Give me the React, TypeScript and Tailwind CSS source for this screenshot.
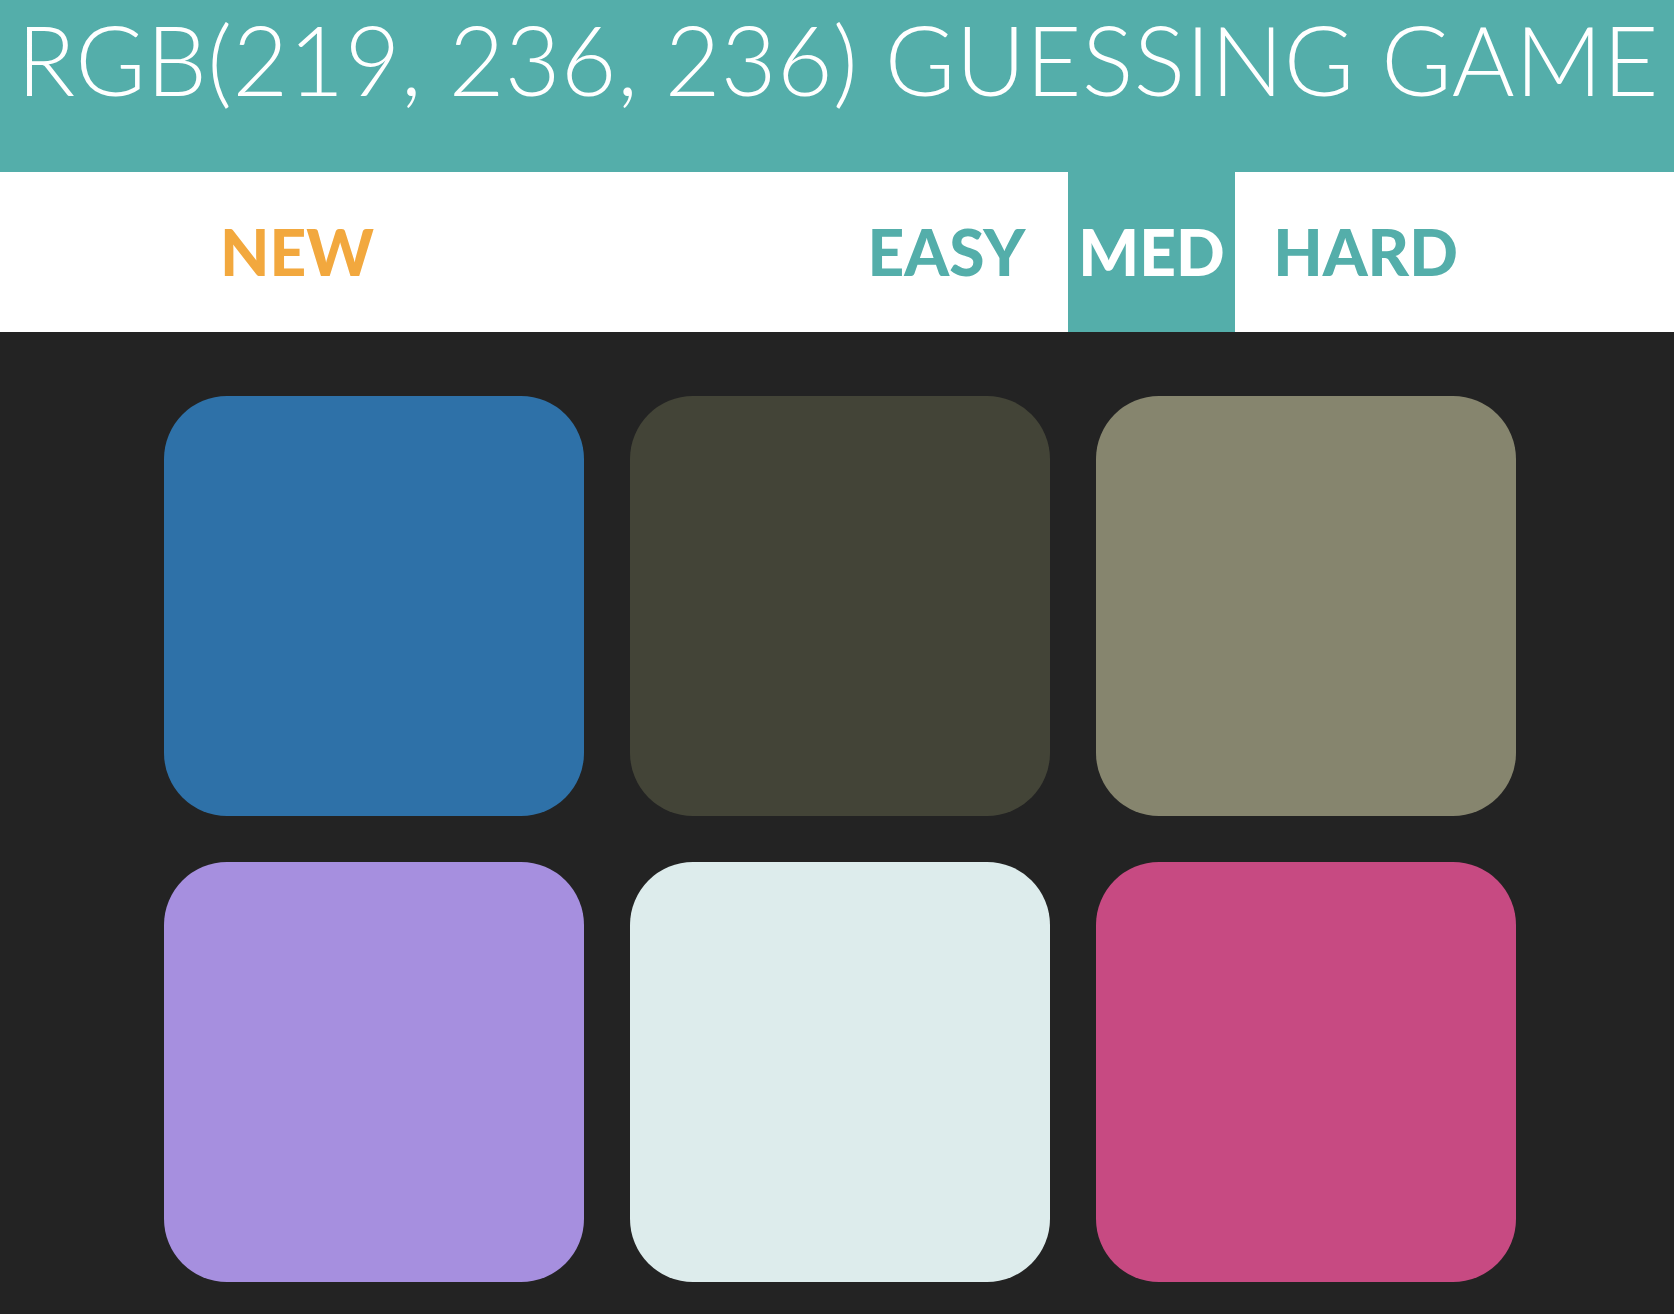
import React from "react";

const colors = ["#2e71a8", "#434437", "#86856e", "#a68fdf", "#ddecec", "#c74a82"];

export default function App() {
  return (
    <div className="min-h-[1314px] bg-[#232323] font-['Lato',sans-serif]">
      <header className="h-[172px] bg-[#54aeaa] pl-[17px] pt-[11px]">
        <h1 className="whitespace-nowrap text-[96px] font-light leading-none tracking-[0.4px] text-white">
          RGB(219, 236, 236) GUESSING GAME
        </h1>
      </header>
      <nav className="flex h-[160px] bg-white pl-[210px] text-[64px] font-black uppercase leading-none">
        <button className="flex w-[174px] items-center justify-center text-[#f2a83e]">NEW</button>
        <button className="ml-[466px] flex w-[193px] items-center justify-center text-[#54aeaa]">EASY</button>
        <button className="ml-[25px] flex w-[167px] items-center justify-center bg-[#54aeaa] text-white">MED</button>
        <button className="ml-[27px] flex w-[207px] items-center justify-center text-[#54aeaa]">HARD</button>
      </nav>
      <main className="pl-[164px] pt-[64px]">
        <div className="grid w-[1352px] grid-cols-3 gap-[46px]">
          {colors.map((c) => (
            <div key={c} className="h-[420px] w-[420px] rounded-[15%]" style={{ backgroundColor: c }} />
          ))}
        </div>
      </main>
    </div>
  );
}
